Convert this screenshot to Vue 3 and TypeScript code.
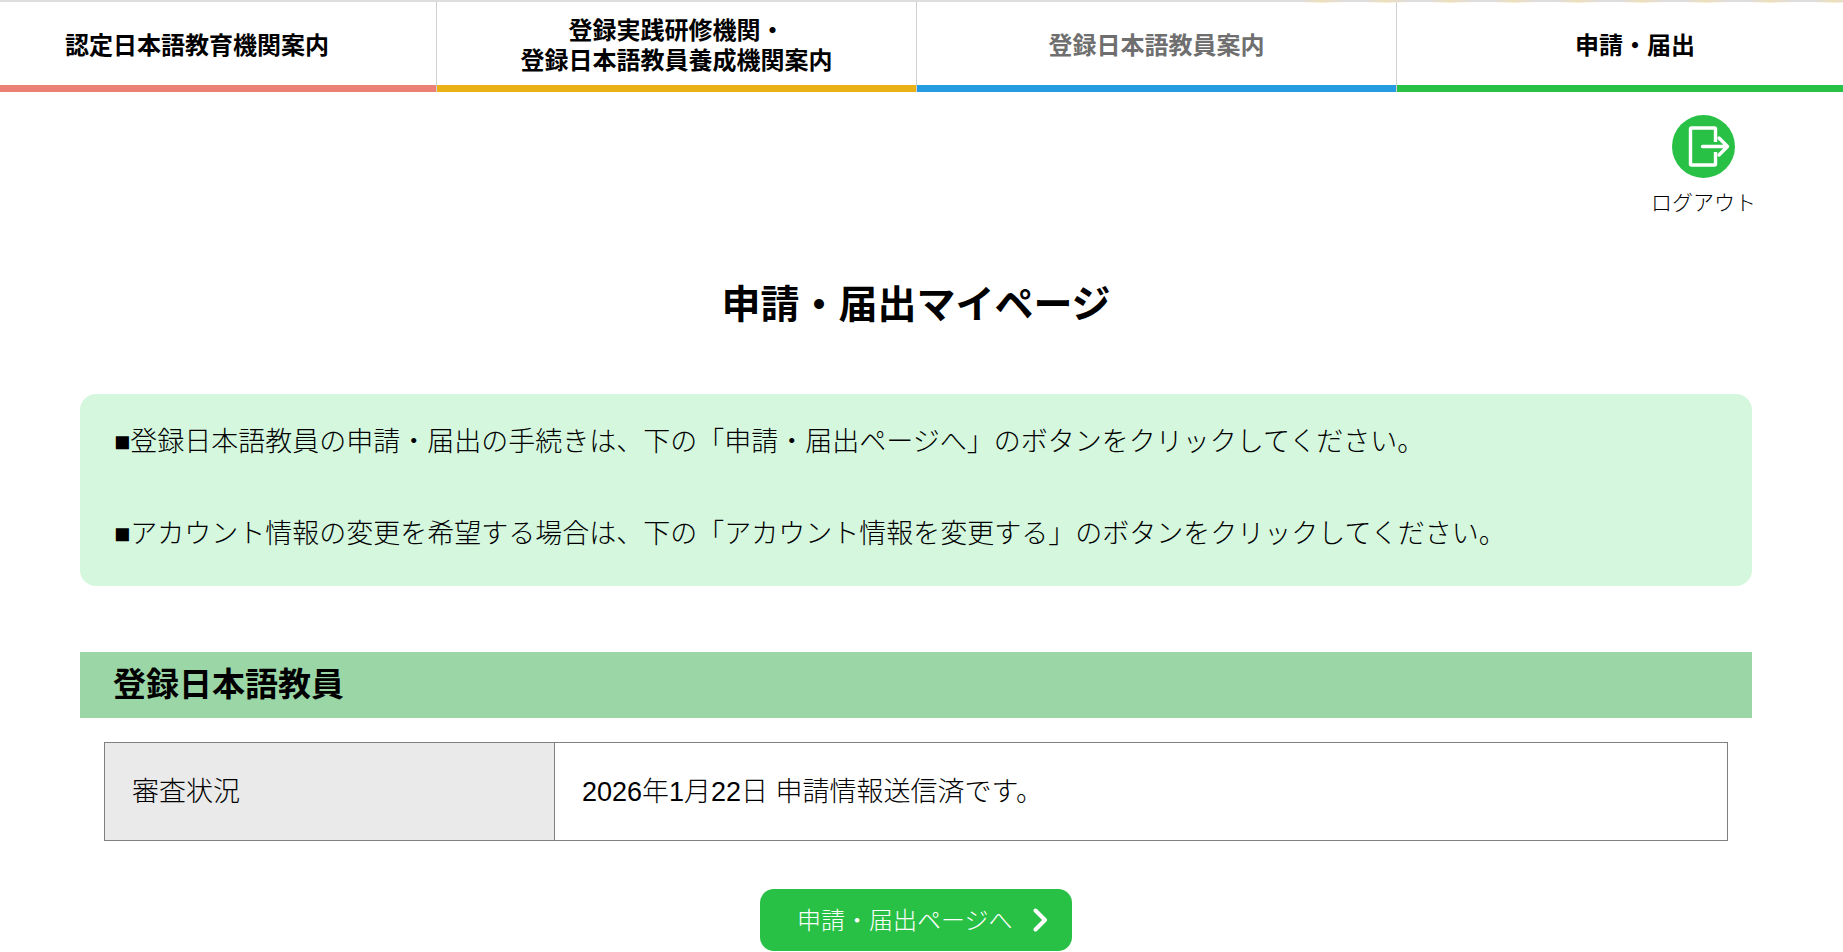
<script setup lang="ts">
interface NavItem { lines: string[]; color: string; muted?: boolean; width: string }
const nav: NavItem[] = [
  { lines: ['認定日本語教育機関案内'], color: '#ec8075', width: '437px' },
  { lines: ['登録実践研修機関・', '登録日本語教員養成機関案内'], color: '#eab116', width: '480px' },
  { lines: ['登録日本語教員案内'], color: '#259ce2', muted: true, width: '480px' },
  { lines: ['申請・届出'], color: '#28c145', width: '446px' },
]
</script>

<template>
  <div class="page">
    <nav class="nav">
      <a
        v-for="item in nav"
        :key="item.lines[0]"
        class="nav-item"
        :class="{ muted: item.muted }"
        :style="{ flexBasis: item.width }"
      >
        <span class="nav-text">
          <span v-for="l in item.lines" :key="l" class="nav-line">{{ l }}</span>
        </span>
        <span class="nav-bar" :style="{ background: item.color }"></span>
      </a>
    </nav>

    <div class="logout-row">
      <a class="logout">
        <span class="logout-icon">
          <svg width="63" height="63" viewBox="0 0 63 63" fill="none">
            <circle cx="31.5" cy="31.5" r="31.5" fill="#28c145" />
            <path d="M43.5 27V14a1 1 0 0 0-1-1H19.5a1 1 0 0 0-1 1V49a1 1 0 0 0 1 1H42.5a1 1 0 0 0 1-1V37" stroke="#fff" stroke-width="3.4" />
            <path d="M30.5 31.5H55M47 23l8.5 8.5L47 40" stroke="#fff" stroke-width="3.4" stroke-linecap="round" stroke-linejoin="round" />
          </svg>
        </span>
        <span class="logout-label">ログアウト</span>
      </a>
    </div>

    <main class="content">
      <h1 class="title">申請・届出マイページ</h1>

      <section class="notice">
        <p>■登録日本語教員の申請・届出の手続きは、下の「申請・届出ページへ」のボタンをクリックしてください。</p>
        <p>■アカウント情報の変更を希望する場合は、下の「アカウント情報を変更する」のボタンをクリックしてください。</p>
      </section>

      <h2 class="section-head">登録日本語教員</h2>

      <div class="status">
        <div class="status-label"><span>審査状況</span></div>
        <div class="status-value"><span>2026年1月22日 申請情報送信済です。</span></div>
      </div>

      <div class="actions">
        <a class="btn">
          <span class="btn-label">申請・届出ページへ</span>
          <svg class="chev" width="15" height="24" viewBox="0 0 15 24" fill="none">
            <path d="M2.5 2.5l9.5 9.5-9.5 9.5" stroke="#fff" stroke-width="4" stroke-linecap="round" stroke-linejoin="round" />
          </svg>
        </a>
      </div>
    </main>
  </div>
</template>

<style>
html, body { margin: 0; overflow: hidden; background: #fff; }
</style>

<style scoped>
.page {
  height: 952px;
  overflow: hidden;
  color: #000;
  font-family: "Liberation Sans", "Noto Sans CJK JP", sans-serif;
}
.nav {
  position: relative;
  display: flex;
  height: 92px;
  box-sizing: border-box;
  border-top: 2px solid #ddd;
}
.nav::before {
  content: "";
  position: absolute;
  top: -2px;
  left: 1300px;
  right: 0;
  height: 3px;
  background: repeating-linear-gradient(90deg, rgba(250, 225, 165, 0) 0, rgba(250, 225, 165, 0.55) 22px, rgba(250, 225, 165, 0) 44px, rgba(250, 225, 165, 0) 64px);
}
.nav-item {
  flex: 0 0 auto;
  box-sizing: border-box;
  display: flex;
  flex-direction: column;
  border-right: 1px solid #d0d0d0;
  font-size: 24px;
  font-weight: 700;
  line-height: 30px;
  text-align: center;
}
.nav-item:last-child { border-right: 0; }
.nav-text {
  flex: 1;
  display: flex;
  flex-direction: column;
  align-items: center;
  justify-content: center;
  padding-top: 4px;
}
.nav-item:first-child .nav-text { padding-right: 42px; }
.nav-item:last-child .nav-text { padding-left: 30px; }
.nav-item.muted { color: #6f6f6f; }
.nav-line { display: block; }
.nav-bar { display: block; height: 7px; }
.logout-row {
  display: flex;
  justify-content: flex-end;
  padding: 23px 87px 0 0;
}
.logout {
  display: flex;
  flex-direction: column;
  align-items: center;
  gap: 12px;
}
.logout-icon { display: block; height: 63px; }
.logout-label { font-size: 21px; line-height: 26px; font-weight: 300; }
.content {
  width: 1672px;
  margin-left: 80px;
}
.title {
  margin: 59px 0 0;
  text-align: center;
  font-size: 39px;
  line-height: 60px;
  font-weight: 700;
}
.notice {
  margin-top: 59px;
  height: 192px;
  box-sizing: border-box;
  padding: 24px 34px;
  background: #d4f7de;
  border-radius: 16px;
  font-size: 27px;
  font-weight: 300;
  line-height: 48px;
}
.notice p { margin: 0; }
.notice p + p { margin-top: 44px; }
.section-head {
  margin: 66px 0 0;
  height: 66px;
  padding-left: 33px;
  background: #9bd6a7;
  font-size: 33px;
  font-weight: 700;
  line-height: 66px;
}
.status {
  display: flex;
  margin: 24px 24px 0;
  height: 99px;
  box-sizing: border-box;
  border: 1px solid #808080;
  font-size: 27px;
  font-weight: 300;
}
.status-label {
  width: 450px;
  box-sizing: border-box;
  padding: 0 0 5px 27px;
  display: flex;
  align-items: center;
  background: #eaeaea;
  border-right: 1px solid #808080;
}
.status-value {
  flex: 1;
  padding: 0 0 5px 27px;
  display: flex;
  align-items: center;
}
.actions {
  display: flex;
  justify-content: center;
  margin-top: 48px;
}
.btn {
  display: flex;
  align-items: center;
  width: 312px;
  height: 62px;
  box-sizing: border-box;
  padding-left: 37px;
  background: #28c145;
  border-radius: 14px;
  color: #fff;
  font-size: 24px;
  font-weight: 300;
}
.btn-label { margin-bottom: 4px; }
.chev { margin-left: 20px; }
</style>
